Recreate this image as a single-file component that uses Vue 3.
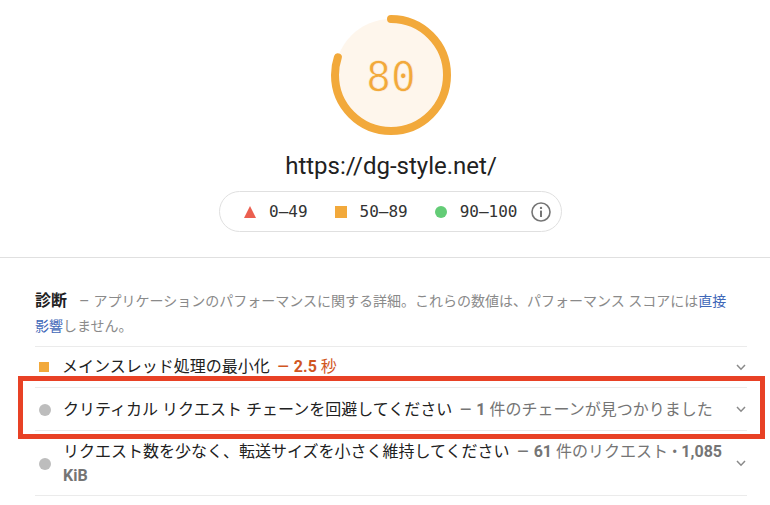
<template>
  <div class="page">
    <header class="summary">
      <svg class="gauge" width="120" height="120" viewBox="0 0 120 120">
        <circle cx="60" cy="60" r="56" fill="#fef6ec" />
        <circle
          class="arc"
          cx="60"
          cy="60"
          r="56"
          :stroke-dasharray="`${arcLength} 400`"
          transform="rotate(-90 60 60)"
        />
      </svg>
      <div class="score">80</div>
      <div class="url">https://dg-style.net/</div>
      <div class="legend">
        <span class="legend-item">
          <svg width="12" height="12" viewBox="0 0 12 12"><path d="M6 0 L12 12 L0 12 Z" fill="#eb5f50" /></svg>
          0–49
        </span>
        <span class="legend-item">
          <svg width="12" height="12" viewBox="0 0 12 12"><rect width="12" height="12" fill="#f2a93b" /></svg>
          50–89
        </span>
        <span class="legend-item">
          <svg width="12" height="12" viewBox="0 0 12 12"><circle cx="6" cy="6" r="6" fill="#63cc76" /></svg>
          90–100
        </span>
        <svg class="info" width="20" height="20" viewBox="0 0 20 20">
          <circle cx="10" cy="10" r="9" fill="none" stroke="#757575" stroke-width="1.6" />
          <circle cx="10" cy="5.9" r="1.2" fill="#757575" />
          <rect x="9" y="8.6" width="2" height="6.4" fill="#757575" />
        </svg>
      </div>
    </header>

    <section class="diagnostics">
      <p class="intro">
        <strong>診断</strong>
        <span class="dash">–</span>アプリケーションのパフォーマンスに関する詳細。これらの数値は、パフォーマンス スコアには<a class="link">直接影響</a>しません。
      </p>

      <div v-for="row in rows" :key="row.title" class="row" :class="{ tall: row.tall }">
        <span class="marker" :class="row.marker"></span>
        <p class="row-text">
          <span class="row-title">{{ row.title }}</span>
          <span class="row-detail" :class="{ warn: row.warn }"><span class="dash">–</span><span v-html="row.detail"></span></span>
        </p>
        <svg class="chevron" width="10" height="7" viewBox="0 0 10 7">
          <path d="M1 1 L5 5.2 L9 1" fill="none" stroke="#8a8a8a" stroke-width="1.5" />
        </svg>
      </div>
    </section>

    <div class="highlight"></div>
  </div>
</template>

<script setup>
const radius = 56;
const arcLength = 2 * Math.PI * radius * 0.8;

const rows = [
  {
    title: "メインスレッド処理の最小化",
    detail: "<b>2.5</b> 秒",
    marker: "square",
    warn: true,
  },
  {
    title: "クリティカル リクエスト チェーンを回避してください",
    detail: "<b>1</b> 件のチェーンが見つかりました",
    marker: "dot",
  },
  {
    title: "リクエスト数を少なく、転送サイズを小さく維持してください",
    detail: "<b>61</b> 件のリクエスト • <b>1,085 KiB</b>",
    marker: "dot",
    tall: true,
  },
];
</script>

<style>
html,
body {
  margin: 0;
  background: #fff;
  overflow: hidden;
}
</style>

<style scoped>
.page {
  position: relative;
  width: 770px;
  height: 505px;
  overflow: hidden;
  font-family: Roboto, "Noto Sans CJK JP", sans-serif;
  color: #212121;
}

.summary {
  position: relative;
  display: flex;
  flex-direction: column;
  align-items: center;
  box-sizing: border-box;
  height: 258px;
  padding: 15px 0 0 12px;
  border-bottom: 1px solid #e0e0e0;
}

.gauge {
  display: block;
}

.arc {
  fill: none;
  stroke: #f2a93b;
  stroke-width: 8;
  stroke-linecap: round;
}

.score {
  position: absolute;
  top: 52px;
  left: 0;
  right: 0;
  padding-left: 12px;
  text-align: center;
  font-family: "DejaVu Sans Mono", monospace;
  font-size: 41px;
  line-height: 50px;
  color: #f2a93b;
  -webkit-text-stroke: 0.6px #fef6ec;
}

.url {
  margin-top: 16px;
  font-size: 24px;
  line-height: 30px;
}

.legend {
  margin: 10px 0 0 -1px;
  width: 343px;
  height: 41px;
  box-sizing: border-box;
  border: 1px solid #e0e0e0;
  border-radius: 21px;
  display: flex;
  align-items: center;
  padding-left: 24px;
  font-family: "DejaVu Sans Mono", monospace;
  font-size: 16px;
  color: #333;
}

.legend-item {
  display: flex;
  align-items: center;
  gap: 13px;
  margin-right: 27px;
  white-space: nowrap;
}

.info {
  margin-left: -14px;
}

.diagnostics {
  padding: 30px 23px 0 35px;
}

.intro {
  margin: 0;
  box-sizing: border-box;
  height: 58px;
  padding-right: 12px;
  font-size: 14px;
  line-height: 25px;
  color: #8a8a8a;
  box-shadow: 0 1px 0 #ebebeb;
}

.intro strong {
  font-size: 16px;
  font-weight: 700;
  color: #212121;
  margin-right: 12px;
}

.dash {
  display: inline-block;
  font-size: 20px;
  line-height: 1;
  margin-right: 4px;
  vertical-align: -2px;
}

.intro .dash {
  font-size: 16px;
  margin-right: 4px;
  vertical-align: -1px;
}

.link {
  color: #3f68b8;
}

.row {
  display: flex;
  align-items: center;
  height: 42px;
  box-sizing: border-box;
  margin-top: 1px;
  border-bottom: 1px solid #ebebeb;
  padding-left: 4px;
}

.row:first-of-type {
  height: 41px;
}

.row.tall {
  height: 64px;
}

.marker {
  flex: none;
  width: 10px;
  height: 10px;
  margin-right: 13px;
}

.marker.square {
  background: #f2a93b;
}

.marker.dot {
  width: 12px;
  height: 12px;
  border-radius: 50%;
  background: #bdbdbd;
  margin-right: 12px;
}

.row-text {
  flex: 1;
  margin: 0;
  font-size: 16px;
  line-height: 24px;
}

.row-title {
  margin-right: 7px;
}

.row-detail {
  color: #757575;
}

.row-detail.warn {
  color: #d1561f;
}

.row-detail :deep(b) {
  font-weight: 700;
}

.chevron {
  flex: none;
  margin: 0 1px 0 9px;
}

.highlight {
  position: absolute;
  left: 18px;
  top: 376px;
  width: 747px;
  height: 63px;
  box-sizing: border-box;
  border: 5px solid #e84125;
}
</style>
